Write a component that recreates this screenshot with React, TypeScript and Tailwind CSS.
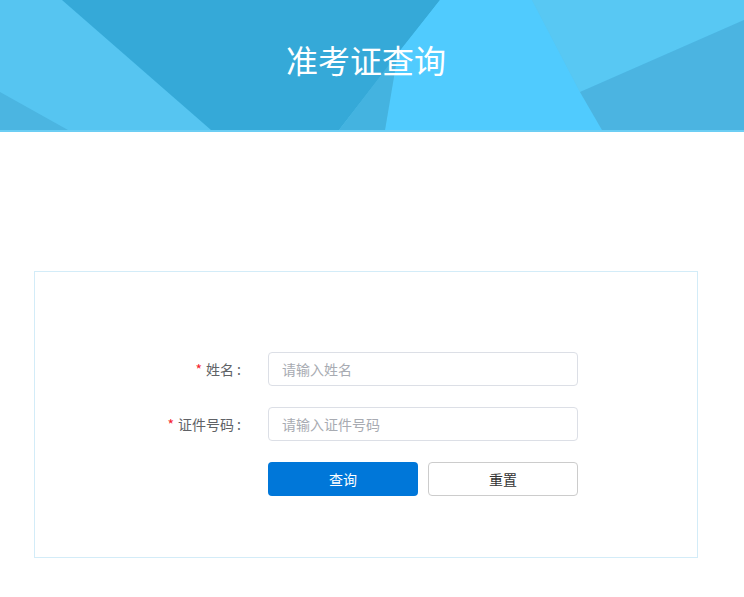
import React from 'react'

const font = { fontFamily: '"Noto Sans CJK SC", "Noto Sans", sans-serif' }

function HeaderArt() {
  return (
    <svg className="absolute inset-0 w-full h-full" viewBox="0 0 744 130" preserveAspectRatio="none">
      <rect x="0" y="0" width="744" height="130" fill="#56c5f1" />
      <polygon points="0,92 68,130 0,130" fill="#4bb5e1" />
      <polygon points="62,0 440,0 339,130 211,130" fill="#35a9d8" />
      <polygon points="440,0 532,0 580,92 602,130 385,130 398,53" fill="#50cbfe" />
      <polygon points="398,53 385,130 339,130" fill="#44b3e0" />
      <polygon points="532,0 744,0 744,20 580,92" fill="#58c8f3" />
      <polygon points="580,92 744,20 744,130 602,130" fill="#4bb4e1" />
    </svg>
  )
}

interface FieldProps {
  label: string
  placeholder: string
}

function Field({ label, placeholder }: FieldProps) {
  return (
    <div className="flex items-center h-[34px]">
      <label className="w-[233px] pr-[27px] text-right text-[14px] text-[#606266]">
        <span className="text-[#f5222d] mr-[4px]">*</span>
        {label} :
      </label>
      <input
        className="w-[310px] h-[34px] border border-[#dcdfe6] rounded-[4px] px-[13px] text-[14px] text-[#333] placeholder:text-[#a8abb2] outline-none"
        placeholder={placeholder}
        style={font}
      />
    </div>
  )
}

export default function App() {
  return (
    <div className="min-h-[597px] bg-white" style={font}>
      <header className="relative h-[132px] border-b-2 border-[#6ccef4] overflow-hidden">
        <HeaderArt />
        <h1 className="relative text-center text-white text-[32px] leading-none pt-[43px] pr-[12px]">准考证查询</h1>
      </header>

      <div className="ml-[34px] mt-[139px] w-[664px] h-[287px] border border-[#d3ecf8] pt-[80px]">
        <div className="flex flex-col gap-[21px]">
          <Field label="姓名" placeholder="请输入姓名" />
          <Field label="证件号码" placeholder="请输入证件号码" />
          <div className="flex pl-[233px] gap-[10px]">
            <button className="w-[150px] h-[34px] rounded-[4px] bg-[#0077d9] text-white text-[14px]">查询</button>
            <button className="w-[150px] h-[34px] rounded-[4px] border border-[#cccccc] bg-white text-[#333] text-[14px]">重置</button>
          </div>
        </div>
      </div>
    </div>
  )
}
